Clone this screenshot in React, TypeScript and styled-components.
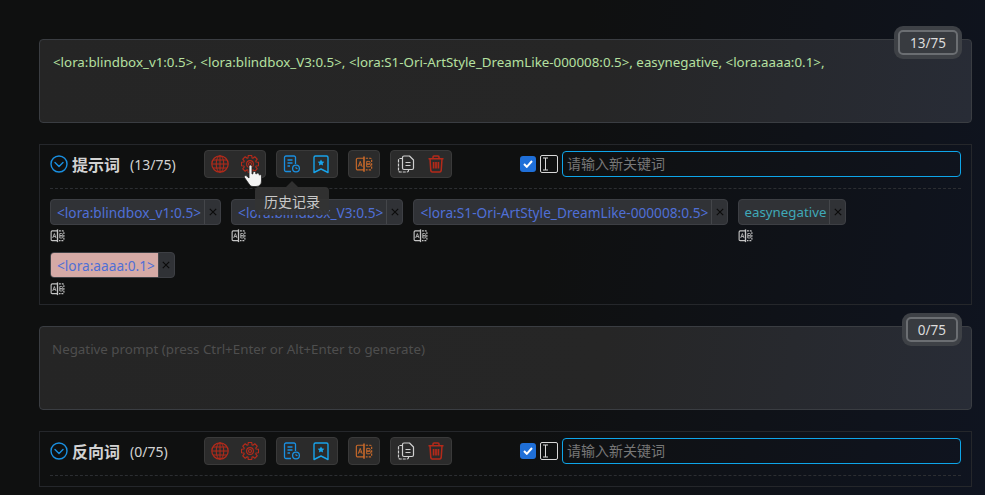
import { createGlobalStyle, styled } from 'styled-components';

const GlobalStyle = createGlobalStyle`
  html, body {
    margin: 0;
    padding: 0;
    height: 495px;
    overflow: hidden;
    background: #0f1010;
    font-family: "Noto Sans", "Noto Sans CJK SC", sans-serif;
  }
`;

const RED = '#b52a1a';
const BLUE = '#1a8fe0';
const ORANGE = '#c8692a';
const GREY = '#d0d0d0';

const Page = styled.div`
  position: relative;
  box-sizing: border-box;
  width: 985px;
  height: 495px;
  overflow: hidden;
  padding: 39px 13px 0 39px;
  display: flex;
  flex-direction: column;
  background: linear-gradient(100deg, #0f1010 0%, #0f1010 55%, #0f1420 100%);
`;

const PromptBox = styled.div`
  position: relative;
  flex: none;
  box-sizing: border-box;
  height: 84px;
  padding: 13px 12px;
  border: 1px solid #3a3d42;
  border-radius: 4px;
  background: linear-gradient(100deg, #252525 0%, #262626 60%, #282c36 100%);
  font-size: 13.33px;
  line-height: 18px;
`;

const PromptText = styled.div`
  margin-left: 1px;
  color: #b5e0a0;
`;

const Placeholder = styled.div`
  color: #4e4e4e;
`;

const Counter = styled.div`
  position: absolute;
  top: -10px;
  right: 13px;
  box-sizing: border-box;
  height: 25px;
  padding: 0 10px;
  display: flex;
  align-items: center;
  justify-content: center;
  border: 2px solid #6b6e72;
  border-radius: 5px;
  background: #383b40;
  box-shadow: 0 0 0 4px #3e4146;
  color: #dcdcdc;
  font-size: 13.5px;
`;

const Panel = styled.section<{ $height: number }>`
  flex: none;
  box-sizing: border-box;
  height: ${p => p.$height}px;
  margin: 21px 0;
  padding: 5px 10px 0 10px;
  border: 1px solid #25272b;
`;

const Header = styled.div`
  display: flex;
  align-items: center;
  height: 28px;
  padding-bottom: 10px;
  border-bottom: 1px dashed #2c2e32;
`;

const Title = styled.div`
  width: 154px;
  flex: none;
  display: flex;
  align-items: center;
  color: #d2d2d2;
`;

const TitleText = styled.span`
  margin-left: 4px;
  font-size: 16px;
  font-weight: 700;
`;

const Count = styled.span`
  margin-left: 10px;
  font-size: 14px;
`;

const BtnGroup = styled.div`
  flex: none;
  box-sizing: border-box;
  height: 28px;
  margin-right: 10px;
  padding: 0 6px;
  display: flex;
  align-items: center;
  gap: 12px;
  border: 1px solid #3a3a3a;
  border-radius: 4px;
  background: #2b2b2b;
`;

const InputRow = styled.div`
  flex: 1;
  display: flex;
  align-items: center;
  margin-left: 58px;
`;

const Check = styled.div`
  width: 16px;
  height: 16px;
  border-radius: 3px;
  background: #1f6fd8;
  display: flex;
  align-items: center;
  justify-content: center;
`;

const CursorBox = styled.div`
  box-sizing: border-box;
  width: 18px;
  height: 18px;
  margin: 0 4px;
  border: 1px solid #d8d8d8;
  border-radius: 2px;
  display: flex;
  align-items: center;
  padding-left: 1px;
`;

const KeywordInput = styled.div`
  flex: 1;
  box-sizing: border-box;
  height: 26px;
  padding: 0 4px 2px;
  display: flex;
  align-items: center;
  border: 1px solid #0ea5e9;
  border-radius: 4px;
  color: #777;
  font-size: 14px;
`;

const TagArea = styled.div`
  display: flex;
  flex-wrap: wrap;
  column-gap: 10px;
  row-gap: 9px;
  padding-top: 10px;
`;

const TagWrap = styled.div`
  display: flex;
  flex-direction: column;
  align-items: flex-start;
`;

const Tag = styled.div`
  display: flex;
  height: 26px;
  box-sizing: border-box;
  border: 1px solid #3d3f44;
  border-radius: 4px;
  overflow: hidden;
  background: #303236;
  font-size: 13.7px;
`;

const TagText = styled.span<{ $color: string; $bg?: string; $embedding?: boolean }>`
  display: flex;
  align-items: center;
  padding: ${p => (p.$embedding ? '0 3px 0 5px' : '0 3px 0 6px')};
  font-size: ${p => (p.$embedding ? '13.3px' : 'inherit')};
  color: ${p => p.$color};
  background: ${p => p.$bg ?? 'transparent'};
`;

const TagClose = styled.span`
  box-sizing: border-box;
  width: 16px;
  flex: none;
  display: flex;
  align-items: center;
  justify-content: center;
  border-left: 1px solid #44464a;
`;

const TransIcon = styled.div`
  height: 14px;
  margin-top: 4px;
  line-height: 0;
`;

const Tooltip = styled.div`
  position: absolute;
  left: 255px;
  top: 187px;
  width: 74px;
  height: 28px;
  display: flex;
  align-items: center;
  justify-content: center;
  border-radius: 4px;
  background: rgba(51, 51, 51, 0.92);
  color: #c8c8c8;
  font-size: 14px;

  &::before {
    content: '';
    position: absolute;
    left: 31px;
    top: -6px;
    border-left: 6px solid transparent;
    border-right: 6px solid transparent;
    border-bottom: 6px solid rgba(51, 51, 51, 0.92);
  }
`;

const HandCursor = styled.svg`
  position: absolute;
  left: 243px;
  top: 164px;
`;

const Chevron = () => (
  <svg width="18" height="18" viewBox="0 0 18 18" fill="none" stroke={BLUE} strokeWidth="1.4">
    <circle cx="9" cy="9" r="8" />
    <path d="M5 7.500 9 11.500 13 7.500" strokeLinecap="round" strokeLinejoin="round" />
  </svg>
);

const GlobeIcon = () => (
  <svg width="18" height="18" viewBox="0 0 18 18" fill="none" stroke={RED} strokeWidth="1">
    <circle cx="9" cy="9" r="8.200" strokeWidth="1.200" />
    <ellipse cx="9" cy="9" rx="3.800" ry="8.200" />
    <path d="M9 1v16M1 9h16M2 5h14M2 13h14" />
  </svg>
);

// 8 tooth gear outline, worked out from the angles
const gearPath = () => {
  const pts: string[] = [];
  for (let i = 0; i < 8; i++) {
    const a = (i * Math.PI) / 4;
    const steps: [number, number][] = [
      [6.4, -0.32],
      [8.7, -0.2],
      [8.7, 0.2],
      [6.4, 0.32],
    ];
    steps.forEach(([r, d]) => {
      pts.push(`${(9 + r * Math.cos(a + d)).toFixed(2)} ${(9 + r * Math.sin(a + d)).toFixed(2)}`);
    });
  }
  return `M${pts.join('L')}Z`;
};

const GearIcon = () => (
  <svg width="18" height="18" viewBox="0 0 18 18" fill="none" stroke={RED} strokeWidth="1.100" strokeLinejoin="round">
    <path d={gearPath()} />
    <circle cx="9" cy="9" r="3.400" />
    <circle cx="9" cy="9" r="1.500" />
  </svg>
);

const HistoryIcon = () => (
  <svg width="18" height="18" viewBox="0 0 18 18" fill="none" stroke={BLUE} strokeWidth="1.300">
    <path d="M8 16.500H3a1.500 1.500 0 0 1-1.500-1.500V2.500A1.500 1.500 0 0 1 3 1h8a1.500 1.500 0 0 1 1.500 1.500V9" />
    <path d="M4.500 5h5M4.500 8h5M4.500 11h2.500" />
    <circle cx="13" cy="13.500" r="3.400" />
    <path d="M13 11.800v1.800h1.600" strokeWidth="1" />
  </svg>
);

const BookmarkIcon = () => (
  <svg width="18" height="19" viewBox="0 0 18 19" fill="none" stroke="#18a3ea" strokeWidth="1.400">
    <path d="M2.500 1h11A1.500 1.500 0 0 1 15 2.500V17.500L8 14 1 17.500V2.500A1.500 1.500 0 0 1 2.500 1z" strokeLinejoin="round" />
    <path d="M8 4.500l1.100 2 2.200.3-1.600 1.600.4 2.200-2.100-1-2.100 1 .4-2.200-1.600-1.600 2.200-.3z" fill="#18a3ea" stroke="none" />
  </svg>
);

const BookIcon = ({ color, size }: { color: string; size: number }) => (
  <svg width={size} height={size * 0.9} viewBox="0 0 20 18" fill="none" stroke={color} strokeWidth={size > 16 ? 1.300 : 1.500}>
    <path d="M10 2.500H3A1.500 1.500 0 0 0 1.500 4v10A1.500 1.500 0 0 0 3 15.500h7" />
    <path d="M12 2.500h5A1.500 1.500 0 0 1 18.500 4v10a1.500 1.500 0 0 1-1.500 1.500h-5" strokeDasharray="2.500 1.200" />
    <path d="M10 .5v17" strokeWidth="1.800" />
    <path d="M3.600 12 5.800 6 8 12M4.400 10h2.800" strokeWidth="1.100" />
    <path d="M13 6h2.400a1.400 1.400 0 0 1 0 3H13zM13 9h2.800a1.500 1.500 0 0 1 0 3H13z" strokeWidth="1.100" />
  </svg>
);

const CopyIcon = () => (
  <svg width="18" height="18" viewBox="0 0 18 18" fill="none" stroke={GREY} strokeWidth="1.200">
    <path d="M7 1h5.500L16.500 5v8a1.500 1.500 0 0 1-1.500 1.500H7A1.500 1.500 0 0 1 5.500 13V2.500A1.500 1.500 0 0 1 7 1z" strokeLinejoin="round" />
    <path d="M5.500 3.500H3A1.500 1.500 0 0 0 1.500 5v10.500A1.500 1.500 0 0 0 3 17h7a1.500 1.500 0 0 0 1.500-1.500v-1" strokeDasharray="3 1" />
    <path d="M8.500 7.500h5M8.500 10.500h5" />
  </svg>
);

const TrashIcon = () => (
  <svg width="18" height="18" viewBox="-1 0 18 18" fill="none" stroke={RED} strokeWidth="1.500">
    <path d="M0.500 3.700h15M5 3.500V2a1 1 0 0 1 1-1h4a1 1 0 0 1 1 1v1.500" />
    <path d="M2 3.700l.8 12a1.500 1.500 0 0 0 1.500 1.300h7.400a1.500 1.500 0 0 0 1.500-1.300l.8-12" />
    <path d="M5.600 7v6.500M8 7v6.500M10.400 7v6.500" strokeWidth="1.700" />
  </svg>
);

const CloseIcon = () => (
  <svg width="8" height="8" viewBox="0 0 8 8" stroke="#0c0c0c" strokeWidth="1.200">
    <path d="M.8.8l6.400 6.400M7.200.8.800 7.200" />
  </svg>
);

type TagItem = { text: string; color: string; bg?: string; embedding?: boolean };

const tags: TagItem[] = [
  { text: '<lora:blindbox_v1:0.5>', color: '#4f6fd6' },
  { text: '<lora:blindbox_V3:0.5>', color: '#4f6fd6' },
  { text: '<lora:S1-Ori-ArtStyle_DreamLike-000008:0.5>', color: '#4f6fd6' },
  { text: 'easynegative', color: '#3fa9b8', embedding: true },
  { text: '<lora:aaaa:0.1>', color: '#4f6fd6', bg: '#d5aaa6' },
];

const Toolbar = ({ title, count }: { title: string; count: string }) => (
  <Header>
    <Title>
      <Chevron />
      <TitleText>{title}</TitleText>
      <Count>{count}</Count>
    </Title>
    <BtnGroup>
      <GlobeIcon />
      <GearIcon />
    </BtnGroup>
    <BtnGroup>
      <HistoryIcon />
      <BookmarkIcon />
    </BtnGroup>
    <BtnGroup>
      <BookIcon color={ORANGE} size={18} />
    </BtnGroup>
    <BtnGroup>
      <CopyIcon />
      <TrashIcon />
    </BtnGroup>
    <InputRow>
      <Check>
        <svg width="10" height="8" viewBox="0 0 10 8" fill="none" stroke="#fff" strokeWidth="2">
          <path d="M1 4l2.800 2.800L9 1" />
        </svg>
      </Check>
      <CursorBox>
        <svg width="7" height="14" viewBox="0 0 7 14" fill="none" stroke="#d8d8d8" strokeWidth="1">
          <path d="M1 1h5M3.500 1v12M1 13h5" />
        </svg>
      </CursorBox>
      <KeywordInput>请输入新关键词</KeywordInput>
    </InputRow>
  </Header>
);

const App = () => (
  <Page>
    <GlobalStyle />
    <PromptBox>
      <PromptText>
        &lt;lora:blindbox_v1:0.5&gt;, &lt;lora:blindbox_V3:0.5&gt;, &lt;lora:S1-Ori-ArtStyle_DreamLike-000008:0.5&gt;, easynegative, &lt;lora:aaaa:0.1&gt;,
      </PromptText>
      <Counter>13/75</Counter>
    </PromptBox>
    <Panel $height={161}>
      <Toolbar title="提示词" count="(13/75)" />
      <TagArea>
        {tags.map(tag => (
          <TagWrap key={tag.text}>
            <Tag>
              <TagText $color={tag.color} $bg={tag.bg} $embedding={tag.embedding}>{tag.text}</TagText>
              <TagClose><CloseIcon /></TagClose>
            </Tag>
            <TransIcon><BookIcon color="#c4c4c4" size={15} /></TransIcon>
          </TagWrap>
        ))}
      </TagArea>
    </Panel>
    <PromptBox>
      <Placeholder>Negative prompt (press Ctrl+Enter or Alt+Enter to generate)</Placeholder>
      <Counter>0/75</Counter>
    </PromptBox>
    <Panel $height={56}>
      <Toolbar title="反向词" count="(0/75)" />
    </Panel>
    <Tooltip>历史记录</Tooltip>
    <HandCursor width="20" height="24" viewBox="0 0 20 24">
      <path
        d="M6 2.500a1.500 1.500 0 0 1 3 0V10l1-.3V8.500a1.400 1.400 0 0 1 2.700 0v1.200l.9 0a1.400 1.400 0 0 1 2.600.6v.8a1.300 1.300 0 0 1 2.300.9V17c0 3.500-2 5.500-5.500 5.500H10c-2 0-3-1-4-2.500L1.500 13.500c-.8-1.200 1-2.700 2.200-1.500L6 14z"
        fill="#f4f4f4"
        stroke="#222"
        strokeWidth="0.800"
      />
    </HandCursor>
  </Page>
);

export default App;
